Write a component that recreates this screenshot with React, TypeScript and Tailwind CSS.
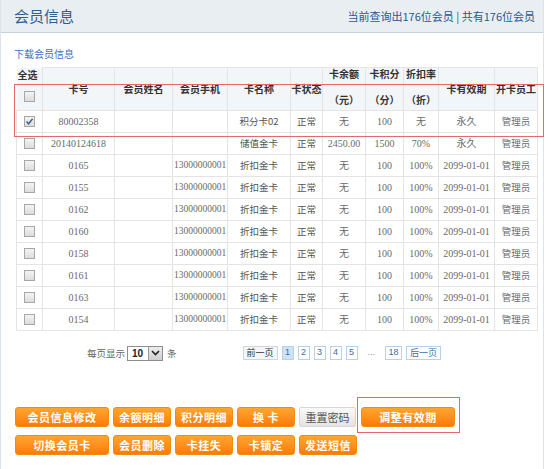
import React from 'react'

const cols = [26, 72, 58, 55, 63, 32, 43, 38, 35, 56, 43]

type Row = {
  checked?: boolean
  no: string
  name: string
  phone: string
  card: string
  status: string
  balance: string
  points: string
  rate: string
  expire: string
  staff: string
}

const rows: Row[] = [
  { checked: true, no: '80002358', name: '', phone: '', card: '积分卡02', status: '正常', balance: '无', points: '100', rate: '无', expire: '永久', staff: '管理员' },
  { no: '20140124618', name: '', phone: '', card: '储值金卡', status: '正常', balance: '2450.00', points: '1500', rate: '70%', expire: '永久', staff: '管理员' },
  ...['0165', '0155', '0162', '0160', '0158', '0161', '0163', '0154'].map((no) => ({
    no,
    name: '',
    phone: '13000000001',
    card: '折扣金卡',
    status: '正常',
    balance: '无',
    points: '100',
    rate: '100%',
    expire: '2099-01-01',
    staff: '管理员',
  })),
]

function Check({ checked }: { checked?: boolean }) {
  return (
    <span className="inline-flex w-[11px] h-[11px] border border-[#a7a7a7] bg-gradient-to-b from-[#f4f4f4] to-[#dcdcdc] items-center justify-center align-middle">
      {checked && (
        <svg width="9" height="9" viewBox="0 0 9 9">
          <path d="M1.5 4.5 L3.6 6.8 L7.6 1.8" fill="none" stroke="#3d5f8a" strokeWidth="1.4" />
        </svg>
      )}
    </span>
  )
}

function OrangeBtn({ label, w }: { label: string; w: string }) {
  return (
    <button
      className={`${w} h-[20px] rounded-[3px] bg-gradient-to-b from-[#ffa52e] to-[#ff7b00] border border-[#f08a10] text-white text-[11px] font-bold leading-none tracking-[0.5px] flex items-center justify-center`}
    >
      {label}
    </button>
  )
}

function TwoLine({ top, bottom }: { top: string; bottom: string }) {
  return (
    <div className="flex flex-col items-center gap-[16px] pb-[5px] leading-none">
      <span>{top}</span>
      <span>{bottom}</span>
    </div>
  )
}

const cell = 'border border-[#e4e4e4] text-center px-0 leading-none'

export default function App() {
  return (
    <div className="w-[554px] h-[469px] bg-white font-['Noto_Sans_CJK_SC',sans-serif] overflow-hidden">
      <div className="w-[544px] h-full border-l border-r border-[#dde3ea] flex flex-col relative">
        {/* Header */}
        <div className="h-[33px] bg-[#e9eef3] border-b border-[#c8d2dc] flex items-center justify-between pl-[13px] pr-[8px] flex-shrink-0">
          <div className="text-[15px] text-[#2f5f91]">会员信息</div>
          <div className="text-[11px] text-[#1f5996]">当前查询出176位会员 | 共有176位会员</div>
        </div>

        <div className="pl-[13px] pt-[14px] text-[10px] text-[#3e6fc2] leading-[14px]">下载会员信息</div>

        {/* Table */}
        <div className="pl-[15px] pt-[6px]">
          <table className="table-fixed border-collapse w-[521px] font-['Liberation_Serif','Noto_Sans_CJK_SC',serif] text-[10px] text-[#6a6a6a]">
            <colgroup>
              {cols.map((w, i) => (
                <col key={i} style={{ width: w }} />
              ))}
            </colgroup>
            <thead>
              <tr className="h-[43px] bg-[#f3f6f9] text-[#333] font-bold font-['Noto_Sans_CJK_SC',sans-serif]">
                <th className="border-r border-[#e4e4e4] align-top pt-[2px] text-[10px] leading-none">
                  <div className="text-left pl-[1px]">全选</div>
                  <div className="mt-[11px]">
                    <Check />
                  </div>
                </th>
                <th className={cell}>卡号</th>
                <th className={cell}>会员姓名</th>
                <th className={cell}>会员手机</th>
                <th className={cell}>卡名称</th>
                <th className={cell}>卡状态</th>
                <th className={cell}><TwoLine top="卡余额" bottom="（元）" /></th>
                <th className={cell}><TwoLine top="卡积分" bottom="（分）" /></th>
                <th className={cell}><TwoLine top="折扣率" bottom="（折）" /></th>
                <th className={cell}>卡有效期</th>
                <th className={cell}>开卡员工</th>
              </tr>
            </thead>
            <tbody>
              {rows.map((r, i) => (
                <tr key={i} className="h-[22px] bg-white">
                  <td className={cell}><Check checked={r.checked} /></td>
                  <td className={cell}>{r.no}</td>
                  <td className={cell}>{r.name}</td>
                  <td className={`${cell} text-[9.5px]`}>{r.phone}</td>
                  <td className={`${cell} text-[9.5px] text-[#555] font-['Noto_Sans_CJK_SC',sans-serif]`}>{r.card}</td>
                  <td className={`${cell} text-[9.5px] text-[#555] font-['Noto_Sans_CJK_SC',sans-serif]`}>{r.status}</td>
                  <td className={cell}>{r.balance}</td>
                  <td className={cell}>{r.points}</td>
                  <td className={cell}>{r.rate}</td>
                  <td className={cell}>{r.expire}</td>
                  <td className={`${cell} text-[9.5px] font-['Noto_Sans_CJK_SC',sans-serif]`}>{r.staff}</td>
                </tr>
              ))}
            </tbody>
          </table>
        </div>

        {/* Highlight on first rows */}
        <div className="absolute left-[13px] top-[84px] w-[530px] h-[53px] border-[1.5px] border-[#e26a6a] pointer-events-none" />

        {/* Pagination */}
        <div className="flex items-center mt-[14px] h-[16px]">
          <div className="flex items-center pl-[86px] text-[9.5px] text-[#666]">
            <span>每页显示</span>
            <div className="ml-[2px] w-[36px] h-[15px] border border-[#8e8e8e] bg-white flex items-center justify-between">
              <span className="pl-[4px] text-[10px] font-bold text-[#222] font-['Liberation_Sans',sans-serif]">10</span>
              <span className="w-[14px] h-[13px] bg-gradient-to-b from-[#ececec] to-[#cfcfcf] border-l border-[#999] flex items-center justify-center">
                <svg width="9" height="6" viewBox="0 0 9 6">
                  <path d="M1 1 L4.5 4.5 L8 1" fill="none" stroke="#222" strokeWidth="1.6" />
                </svg>
              </span>
            </div>
            <span className="ml-[4px]">条</span>
          </div>

          <div className="flex items-center ml-[66px] text-[9px] font-['Liberation_Sans',sans-serif]">
            <span className="h-[14px] px-[3px] border border-[#cdd6e0] bg-[#f4f6f8] text-[#333] flex items-center font-['Noto_Sans_CJK_SC',sans-serif]">前一页</span>
            <span className="ml-[4px] w-[12px] h-[14px] border border-[#b8d0ea] bg-[#cfe2f4] text-[#3c6ea5] flex items-center justify-center">1</span>
            {['2', '3', '4', '5'].map((p) => (
              <span key={p} className="ml-[4px] w-[12px] h-[14px] border border-[#b8d0ea] bg-white text-[#3c6ea5] flex items-center justify-center">{p}</span>
            ))}
            <span className="ml-[10px] mr-[10px] text-[#888]">...</span>
            <span className="w-[17px] h-[14px] border border-[#b8d0ea] bg-white text-[#3c6ea5] flex items-center justify-center">18</span>
            <span className="ml-[4px] h-[14px] px-[3px] border border-[#b8d0ea] bg-white text-[#3c6ea5] flex items-center font-['Noto_Sans_CJK_SC',sans-serif]">后一页</span>
          </div>
        </div>

        {/* Buttons */}
        <div className="pl-[14px] mt-[46px] flex flex-col gap-[8px]">
          <div className="flex items-center gap-[4px]">
            <OrangeBtn label="会员信息修改" w="w-[94px]" />
            <OrangeBtn label="余额明细" w="w-[58px]" />
            <OrangeBtn label="积分明细" w="w-[58px]" />
            <OrangeBtn label="换 卡" w="w-[58px]" />
            <button className="w-[57px] h-[20px] rounded-[2px] bg-gradient-to-b from-[#fafafa] to-[#e4e4e4] border border-[#d6d6d6] text-[11px] text-[#555] leading-none flex items-center justify-center">
              重置密码
            </button>
            <div className="relative ml-[1px]">
              <OrangeBtn label="调整有效期" w="w-[94px]" />
              <div className="absolute -left-[4px] -top-[10px] w-[103px] h-[36px] border-[1.5px] border-[#e26a6a] pointer-events-none" />
            </div>
          </div>
          <div className="flex items-center gap-[4px]">
            <OrangeBtn label="切换会员卡" w="w-[94px]" />
            <OrangeBtn label="会员删除" w="w-[58px]" />
            <OrangeBtn label="卡挂失" w="w-[58px]" />
            <OrangeBtn label="卡锁定" w="w-[58px]" />
            <OrangeBtn label="发送短信" w="w-[58px]" />
          </div>
        </div>
      </div>
    </div>
  )
}
